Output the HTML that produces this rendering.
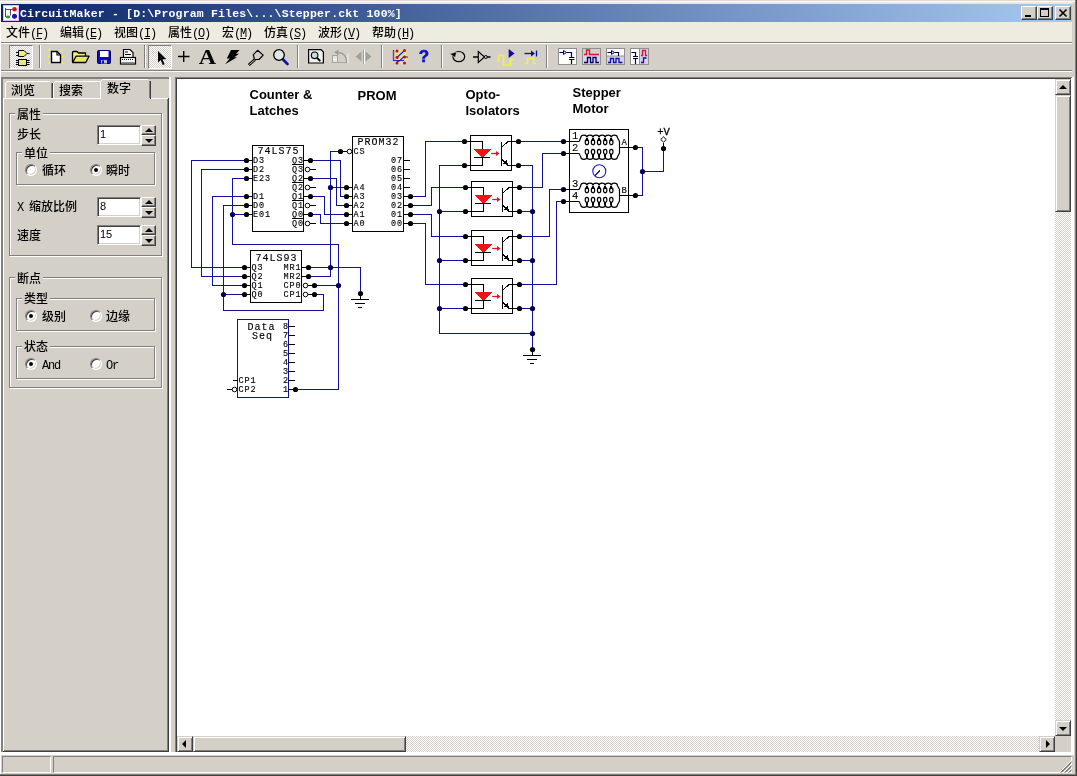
<!DOCTYPE html>
<html lang="zh">
<head>
<meta charset="utf-8">
<title>CircuitMaker</title>
<style>
html,body{margin:0;padding:0;}
body{width:1077px;height:776px;overflow:hidden;background:#d4d0c8;position:relative;
 font-family:"Liberation Sans","Noto Sans CJK SC",sans-serif;font-size:12px;font-weight:500;color:#000;}
.abs{position:absolute;}
#win{position:absolute;left:0;top:0;width:1077px;height:776px;background:#d4d0c8;overflow:hidden;}
#ckt,#menu,#panel,#toolbar,#title .txt{will-change:transform;}
/* outer frame lines */
#fr-top{left:0;top:1px;width:1075px;height:1px;background:#fff;}
#fr-left{left:0;top:1px;width:1px;height:773px;background:#fff;}
#fr-r1{left:1075px;top:0;width:1px;height:775px;background:#808080;}
#fr-r2{left:1076px;top:0;width:1px;height:776px;background:#404040;}
#fr-b1{left:0;top:774px;width:1076px;height:1px;background:#808080;}
#fr-b2{left:0;top:775px;width:1077px;height:1px;background:#404040;}
/* title */
#title{left:1px;top:4px;width:1071px;height:18px;background:linear-gradient(90deg,#0a246a 0%,#a6caf0 100%);}
#title .txt{position:absolute;left:19px;top:2px;color:#fff;font-family:"Liberation Mono",monospace;font-weight:bold;font-size:11.5px;line-height:16px;white-space:pre;letter-spacing:0.17px;}
.tbtn{position:absolute;top:2px;width:16px;height:14px;background:#d4d0c8;box-sizing:border-box;border:1px solid;border-color:#fff #404040 #404040 #fff;box-shadow:inset -1px -1px 0 #808080;}
/* menu */
#menu{left:1px;top:22px;width:1071px;height:20px;background:#eeebe1;}
#menu span.m{position:absolute;top:3px;line-height:16px;white-space:pre;}
.lat{font-family:"Liberation Mono",monospace;letter-spacing:-1.2px;}
u{text-decoration:underline;}
/* toolbar */
#tb-top1{left:1px;top:42px;width:1071px;height:1px;background:#808080;}
#tb-top2{left:1px;top:43px;width:1071px;height:1px;background:#fff;}
#tb-bot1{left:1px;top:70px;width:1071px;height:1px;background:#808080;}
#tb-bot2{left:1px;top:71px;width:1071px;height:1px;background:#fff;}
.sep{position:absolute;top:45px;width:1px;height:23px;background:#808080;box-shadow:1px 0 0 #fff;}
.pressed{position:absolute;top:45px;width:24px;height:24px;box-sizing:border-box;border:1px solid;border-color:#808080 #fff #fff #808080;
 background-color:#fff;background-image:linear-gradient(45deg,#d4d0c8 25%,transparent 25%,transparent 75%,#d4d0c8 75%),linear-gradient(45deg,#d4d0c8 25%,transparent 25%,transparent 75%,#d4d0c8 75%);background-size:2px 2px;background-position:0 0,1px 1px;}
.ico{position:absolute;overflow:visible;}
.track{background-color:#fff;background-image:linear-gradient(45deg,#d4d0c8 25%,transparent 25%,transparent 75%,#d4d0c8 75%),linear-gradient(45deg,#d4d0c8 25%,transparent 25%,transparent 75%,#d4d0c8 75%);background-size:2px 2px;background-position:0 0,1px 1px;}
.rb{box-sizing:border-box;background:#d4d0c8;border:1px solid;border-color:#d4d0c8 #404040 #404040 #d4d0c8;box-shadow:inset 1px 1px 0 #fff, inset -1px -1px 0 #808080;}
.rb i{position:absolute;width:0;height:0;}
.t-up{left:3px;top:5px;border-left:4px solid transparent;border-right:4px solid transparent;border-bottom:4px solid #000;}
.t-dn{left:3px;top:6px;border-left:4px solid transparent;border-right:4px solid transparent;border-top:4px solid #000;}
.t-lt{left:4px;top:3px;border-top:4px solid transparent;border-bottom:4px solid transparent;border-right:4px solid #000;}
.t-rt{left:6px;top:3px;border-top:4px solid transparent;border-bottom:4px solid transparent;border-left:4px solid #000;}
.sc{box-sizing:border-box;border:1px solid;border-color:#808080 #fff #fff #808080;}

.tabt,.lbl,.gl{line-height:16px;white-space:pre;}
.gl{background:#d4d0c8;padding:0 2px;}
.gb{position:absolute;box-sizing:border-box;border:1px solid #808080;box-shadow:1px 1px 0 #fff, inset 1px 1px 0 #fff;}
.inp{position:absolute;box-sizing:border-box;width:44px;height:20px;background:#fff;border:1px solid;border-color:#808080 #fff #fff #808080;box-shadow:inset 1px 1px 0 #404040, inset -1px -1px 0 #d4d0c8;font-family:"Liberation Sans",sans-serif;font-size:11px;line-height:16px;padding:0 0 0 2px;}
.spin{position:absolute;width:15px;height:21px;}
.sb{position:absolute;left:0;top:0;width:15px;height:10px;box-sizing:border-box;background:#d4d0c8;border:1px solid;border-color:#fff #404040 #404040 #fff;box-shadow:inset -1px -1px 0 #808080;}
.sb2{top:10px;height:11px;}
.sb i{position:absolute;left:3px;width:0;height:0;border-left:4px solid transparent;border-right:4px solid transparent;}
.sb i.up{top:2px;border-bottom:4px solid #000;}
.sb i.dn{top:3px;border-top:4px solid #000;}
.radio{position:absolute;width:12px;height:12px;box-sizing:border-box;border-radius:50%;background:#fff;border:1px solid;border-color:#808080 #fff #fff #808080;transform:rotate(0deg);box-shadow:inset 1px 1px 0 #404040, inset -1px -1px 0 #d4d0c8;}
.radio.on::after{content:"";position:absolute;left:3px;top:3px;width:4px;height:4px;border-radius:50%;background:#000;}

</style>
</head>
<body>
<div id="win">
 <div class="abs" style="left:0;top:0;width:1075px;height:1px;background:#dedad2"></div><div class="abs" style="left:1px;top:2px;width:1072px;height:2px;background:#ebe8de"></div>
 <div class="abs" id="fr-top"></div><div class="abs" id="fr-left"></div>
 <div class="abs" id="fr-r1"></div><div class="abs" id="fr-r2"></div>
 <div class="abs" id="fr-b1"></div><div class="abs" id="fr-b2"></div>

 <!-- TITLE BAR -->
 <div class="abs" id="title">
  <svg class="ico" style="left:2px;top:1px" width="16" height="16" viewBox="0 0 16 16">
   <rect x="0" y="0" width="16" height="16" fill="#fff"/>
   <rect x="0.500" y="0.500" width="15" height="15" fill="none" stroke="#e0b8f8"/>
   <path d="M2 4.500H9M2.500 3V12M7.500 4.500V10.500" stroke="#505058" fill="none"/>
   <path d="M3 11.500H7" stroke="#308030" fill="none"/>
   <circle cx="11.500" cy="4.200" r="2.300" fill="#d01020"/>
   <circle cx="11.500" cy="11.300" r="2.500" fill="#1018b0"/>
   <ellipse cx="5" cy="12" rx="2.200" ry="1.400" fill="#28a028"/>
  </svg>
  <span class="txt">CircuitMaker - [D:\Program Files\...\Stepper.ckt 100%]</span>
  <div class="tbtn" style="left:1020px"><div class="abs" style="left:3px;top:8px;width:6px;height:2px;background:#000"></div></div>
  <div class="tbtn" style="left:1036px"><div class="abs" style="left:2px;top:1px;width:9px;height:9px;box-sizing:border-box;border:1px solid #000;border-top-width:2px"></div></div>
  <div class="tbtn" style="left:1054px"><svg class="ico" style="left:3px;top:2px" width="8" height="8" viewBox="0 0 8 8"><path d="M0.500 0.500L7.500 7.500M7.500 0.500L0.500 7.500" stroke="#000" stroke-width="1.600"/></svg></div>
 </div>

 <!-- MENU BAR -->
 <div class="abs" id="menu">
  <span class="m" style="left:5px">文件<span class="lat">(<u>F</u>)</span></span>
  <span class="m" style="left:59px">编辑<span class="lat">(<u>E</u>)</span></span>
  <span class="m" style="left:113px">视图<span class="lat">(<u>I</u>)</span></span>
  <span class="m" style="left:167px">属性<span class="lat">(<u>O</u>)</span></span>
  <span class="m" style="left:221px">宏<span class="lat">(<u>M</u>)</span></span>
  <span class="m" style="left:263px">仿真<span class="lat">(<u>S</u>)</span></span>
  <span class="m" style="left:317px">波形<span class="lat">(<u>V</u>)</span></span>
  <span class="m" style="left:371px">帮助<span class="lat">(<u>H</u>)</span></span>
 </div>

 <!-- TOOLBAR -->
 <div class="abs" id="tb-top1"></div><div class="abs" id="tb-top2"></div>
 <div class="abs" id="tb-bot1"></div><div class="abs" id="tb-bot2"></div>
 <div id="toolbar">
 <div class="pressed" style="left:9px"></div>
 <svg class="ico" style="left:9px;top:45px" width="24" height="24" viewBox="9 45 24 24">
  <path d="M16 52.500H18M16 55.500H18M27 53.500H29.500" stroke="#000" fill="none"/>
  <path d="M18.500 50.500H24L27 53.500L24 56.500H18.500Z" fill="#f0f070" stroke="#000"/>
  <path d="M16 60.500H18M16 62.500H18M16 64.500H18M27 60.500H29.500M27 62.500H29.500M27 64.500H29.500" stroke="#000" fill="none"/>
  <rect x="18.500" y="59.500" width="8" height="6" fill="#e8e880" stroke="#000"/>
 </svg>
 <div class="sep" style="left:39px"></div>
 <!-- new -->
 <svg class="ico" style="left:46px;top:46px" width="20" height="20" viewBox="46 46 20 20">
  <g stroke="#f2f250" stroke-width="1.900"><path d="M48.500 49L50 50.500M62.500 49L61 50.500M48 56.500H49.500M62 56.500H63.500M49 63.500L50.500 62M62.500 63.500L61 62"/></g>
  <path d="M51.500 51.500H57L60.500 55V62.500H51.500Z" fill="#fff" stroke="#000" stroke-width="1.400"/>
  <path d="M57 51.500V55H60.500" fill="none" stroke="#000" stroke-width="1.200"/>
 </svg>
 <!-- open -->
 <svg class="ico" style="left:70px;top:46px" width="22" height="20" viewBox="70 46 22 20">
  <path d="M72.500 62V52.500Q72.500 51.500 73.500 51.500H77L78.500 53H85.500V56" fill="#f0f080" stroke="#000" stroke-width="1.300"/>
  <path d="M72.700 62.500L76 56.200H89L85.800 62.500Z" fill="#e8e870" stroke="#000" stroke-width="1.300" stroke-linejoin="round"/>
 </svg>
 <!-- save -->
 <svg class="ico" style="left:96px;top:48px" width="16" height="18" viewBox="96 48 16 18">
  <rect x="97.500" y="50.500" width="13" height="13" rx="1" fill="#0c0cc4" stroke="#000060"/>
  <rect x="100" y="51" width="8.500" height="6" fill="#fff"/>
  <rect x="101" y="60" width="6" height="3.500" fill="#c0c0c0"/>
  <rect x="102" y="60.500" width="2" height="3" fill="#0c0cc4"/>
 </svg>
 <!-- print -->
 <svg class="ico" style="left:118px;top:46px" width="20" height="20" viewBox="118 46 20 20">
  <path d="M123.500 57V49.500H130L133 52.500V57" fill="#fff" stroke="#000" stroke-width="1.200"/>
  <path d="M125 52H128M125 54.500H131" stroke="#000" stroke-width="1.200"/>
  <rect x="120.500" y="57.500" width="15" height="6.500" fill="#fff" stroke="#000" stroke-width="1.200"/>
  <path d="M122 59.500H134" stroke="#000" stroke-dasharray="1 1"/>
  <path d="M121.500 62.500H134.500" stroke="#909090" stroke-width="1.400"/>
 </svg>
 <div class="sep" style="left:144px"></div>
 <!-- arrow (pressed) -->
 <div class="pressed" style="left:148px"></div>
 <svg class="ico" style="left:148px;top:45px" width="24" height="24" viewBox="148 45 24 24">
  <path d="M158 51V62.500L160.700 60L162.800 65L164.600 64.200L162.500 59.300H166.300Z" fill="#000"/>
 </svg>
 <!-- plus -->
 <svg class="ico" style="left:176px;top:48px" width="16" height="16" viewBox="176 48 16 16">
  <path d="M178 56.500H189.500M183.700 51V62" stroke="#000" stroke-width="1.400"/>
 </svg>
 <!-- A -->
 <div class="abs" style="left:197px;top:45px;width:21px;height:24px;font-family:'Liberation Serif',serif;font-weight:bold;font-size:21px;line-height:24px;text-align:center;transform:scaleX(1.14);transform-origin:50% 50%">A</div>
 <!-- lightning -->
 <svg class="ico" style="left:224px;top:48px" width="18" height="18" viewBox="224 48 18 18">
  <path d="M231 50H239.600L236 53.700H239L234.300 57.300H237L225 64.200L229.800 58.600H226.800Z" fill="#000"/>
 </svg>
 <!-- probe -->
 <svg class="ico" style="left:246px;top:48px" width="20" height="18" viewBox="246 48 20 18">
  <path d="M257.600 50.300L263.200 55.100L259 59.500H254.500L253.300 54.600Z" fill="#d4d0c8" stroke="#000" stroke-width="1.200" stroke-linejoin="round"/>
  <path d="M255 59.500L248.800 65" stroke="#000" stroke-width="2.800"/>
  <path d="M254.800 59.800L249.400 64.500" stroke="#e8e8e8" stroke-width="0.900"/>
 </svg>
 <!-- magnifier -->
 <svg class="ico" style="left:271px;top:47px" width="20" height="20" viewBox="271 47 20 20">
  <path d="M283 59.500L287.500 64" stroke="#1010b0" stroke-width="2.600" stroke-linecap="round"/>
  <circle cx="279" cy="55" r="5.300" fill="#e2e8e8" stroke="#000" stroke-width="1.300"/>
 </svg>
 <div class="sep" style="left:297px"></div>
 <!-- zoom fit -->
 <svg class="ico" style="left:306px;top:47px" width="20" height="18" viewBox="306 47 20 18">
  <path d="M308.600 49.600H321L323.400 52V63H308.600Z" fill="#f0f0ee" stroke="#000" stroke-width="1.200"/>
  <circle cx="314.600" cy="55.300" r="3.300" fill="#c4dcdc" stroke="#000" stroke-width="1.100"/>
  <path d="M317 58L320.300 61" stroke="#000" stroke-width="1.700"/>
 </svg>
 <!-- rotate (disabled) -->
 <svg class="ico" style="left:330px;top:48px" width="20" height="16" viewBox="330 48 20 16">
  <rect x="332.500" y="55.500" width="5" height="7" fill="#e8e6e0" stroke="#a4a49c"/>
  <path d="M332 62.500H347.500M337.500 52V56" fill="none" stroke="#a4a49c"/>
  <path d="M338 52.500Q346.500 53 346.500 62" fill="none" stroke="#a0a098" stroke-width="1.300"/>
  <path d="M334 52.300L338.500 49.600V55Z" fill="#a0a098"/>
  <path d="M333 59.500H337M348 54V63" stroke="#fff" stroke-width="1" opacity="0.800"/>
 </svg>
 <!-- mirror (disabled) -->
 <svg class="ico" style="left:354px;top:48px" width="20" height="16" viewBox="354 48 20 16">
  <path d="M355.500 56.500L361.500 51.500V61.500Z M371.500 56.500L365.500 51.500V61.500Z" fill="#a0a098"/>
  <path d="M363.500 49.500V64" stroke="#a0a098"/><path d="M364.500 49.500V64" stroke="#fff"/>
 </svg>
 <div class="sep" style="left:381px"></div>
 <!-- route -->
 <svg class="ico" style="left:390px;top:47px" width="20" height="20" viewBox="390 47 20 20">
  <circle cx="400.500" cy="57" r="7.500" fill="#f4ec70" opacity="0.450"/>
  <path d="M393.500 50V60.500H404M397 57.500L404.500 50.500M397 62L400 60.500L403.500 57H408" fill="none" stroke="#2020c0" stroke-width="1.200"/>
  <path d="M393.500 50.500V60" stroke="#e02020" stroke-width="1.200"/>
  <g fill="#c01010"><circle cx="397" cy="51" r="1.500"/><circle cx="404.500" cy="50.500" r="1.500"/><circle cx="397" cy="57.500" r="1.500"/><circle cx="404.500" cy="57" r="1.500"/><circle cx="397" cy="63" r="1.500"/><circle cx="404.500" cy="63" r="1.500"/></g>
 </svg>
 <!-- help -->
 <div class="abs" style="left:414px;top:45px;width:20px;height:24px;font-family:'Liberation Sans',sans-serif;font-weight:bold;font-size:17px;line-height:24px;text-align:center;color:#1010c8;-webkit-text-stroke:0.6px #1010c8">?</div>
 <div class="sep" style="left:441px"></div>
 <!-- reset -->
 <svg class="ico" style="left:448px;top:48px" width="20" height="16" viewBox="448 48 20 16">
  <ellipse cx="458.800" cy="56.600" rx="5.900" ry="5.100" fill="none" stroke="#000" stroke-width="1.200"/>
  <path d="M449.800 53.800L456.600 52L455.200 57.600Z" fill="#000" stroke="#d4d0c8" stroke-width="0.600"/>
 </svg>
 <!-- inverter -->
 <svg class="ico" style="left:471px;top:48px" width="22" height="16" viewBox="471 48 22 16">
  <path d="M473 57H478M486.500 57H490.500" stroke="#000" stroke-width="1.600"/>
  <path d="M478.300 51.500V62.500L484.500 57Z" fill="#d4d0c8" stroke="#000" stroke-width="1.200"/>
  <circle cx="485.800" cy="57" r="1.500" fill="#d4d0c8" stroke="#000"/>
 </svg>
 <!-- run -->
 <svg class="ico" style="left:496px;top:47px" width="20" height="20" viewBox="496 47 20 20">
  <path d="M498.500 62V55.500H503.500V65H510.500V59.500H514" fill="none" stroke="#f0f050" stroke-width="1.600"/>
  <path d="M508.700 49L514.500 53.500L508.700 58Z" fill="#0c0c94"/>
 </svg>
 <!-- step -->
 <svg class="ico" style="left:521px;top:47px" width="20" height="20" viewBox="521 47 20 20">
  <path d="M524.500 63.500H527.500V58.500H533.500V63.500H536" fill="none" stroke="#f0f050" stroke-width="1.600"/>
  <path d="M524.500 53.500H532" stroke="#0c0ca0" stroke-width="1.300"/>
  <path d="M531 50.500L535 53.500L531 56.500Z" fill="#0c0ca0"/>
  <path d="M536.500 50.500V56.500" stroke="#0c0ca0" stroke-width="1.300"/>
 </svg>
 <div class="sep" style="left:546px"></div>
 <!-- A: probe cap -->
 <svg class="ico" style="left:558px;top:48px" width="19" height="17" viewBox="558 48 19 17">
  <rect x="558.500" y="48.500" width="18" height="16" fill="#fff" stroke="#909090"/>
  <path d="M559.500 52.500H563M566.500 52.500H571.500V57M569 57.500H574.500M569 59.500H574.500M571.500 60V64" fill="none" stroke="#000040" stroke-width="1.200"/>
  <path d="M563.500 50.500V54.500L566.500 52.500Z" fill="#fff" stroke="#000060"/>
 </svg>
 <!-- B: waves -->
 <svg class="ico" style="left:582px;top:48px" width="19" height="17" viewBox="582 48 19 17">
  <rect x="582.500" y="48.500" width="18" height="16" fill="#d8d4e8" stroke="#909090"/>
  <rect x="583" y="49" width="17" height="7" fill="#ccd4cc"/>
  <path d="M584 54.500H586.500V50H589.500V54.500H599" fill="none" stroke="#e01030" stroke-width="1.400"/>
  <path d="M584 62.500H587.500V57.500H590.500V62.500H593V57.500H596V62.500H599" fill="none" stroke="#000060" stroke-width="1.300"/>
 </svg>
 <!-- C -->
 <svg class="ico" style="left:606px;top:48px" width="19" height="17" viewBox="606 48 19 17">
  <rect x="606.500" y="48.500" width="18" height="16" fill="#fff" stroke="#909090"/>
  <rect x="607" y="56" width="17" height="8" fill="#d4d0e8"/>
  <path d="M607 56H624" stroke="#909090"/>
  <path d="M607.500 52.500H611M614.500 52.500H618.500V56" fill="none" stroke="#000040" stroke-width="1.200"/>
  <path d="M611.500 50.500V54.500L614.500 52.500Z" fill="#fff" stroke="#000060"/>
  <path d="M608 62.500H610.500V58.500H613.500V62.500H616V58.500H619V62.500H622.500" fill="none" stroke="#1010a0" stroke-width="1.300"/>
 </svg>
 <!-- D -->
 <svg class="ico" style="left:630px;top:48px" width="19" height="17" viewBox="630 48 19 17">
  <rect x="630.500" y="48.500" width="18" height="16" fill="#fff" stroke="#909090"/>
  <rect x="640" y="49" width="8" height="15" fill="#d4d0e8"/>
  <path d="M639.500 49V64" stroke="#909090"/>
  <path d="M631.500 52.500H635.500V56M633 56.500H638M633 58.500H638M635.500 59V64" fill="none" stroke="#000040" stroke-width="1.200"/>
  <path d="M641 55.500H642.500V50.500H645.500V55.500H647" fill="none" stroke="#e01030" stroke-width="1.300"/>
  <path d="M641 62.500H643.500V58H646.500" fill="none" stroke="#1010a0" stroke-width="1.300"/>
 </svg>
 </div>

 <!-- LEFT PANEL -->
 <div id="panel">
 <!-- frame -->
 <div class="abs" style="left:1px;top:77px;width:170px;height:2px;background:#808080"></div>
 <div class="abs" style="left:1px;top:77px;width:2px;height:677px;background:#808080"></div>
 <div class="abs" style="left:169px;top:77px;width:2px;height:677px;background:#fff"></div>
 <div class="abs" style="left:1px;top:752px;width:175px;height:2px;background:#fff"></div>
 <!-- tab body -->
 <div class="abs" style="left:3px;top:98px;width:98px;height:1px;background:#fff"></div>
 <div class="abs" style="left:151px;top:98px;width:17px;height:1px;background:#fff"></div>
 <div class="abs" style="left:3px;top:98px;width:1px;height:653px;background:#fff"></div>
 <div class="abs" style="left:167px;top:99px;width:1px;height:652px;background:#808080"></div>
 <div class="abs" style="left:168px;top:98px;width:1px;height:654px;background:#404040"></div>
 <div class="abs" style="left:4px;top:750px;width:164px;height:1px;background:#808080"></div>
 <div class="abs" style="left:3px;top:751px;width:166px;height:1px;background:#404040"></div>
 <!-- tab 1 -->
 <div class="abs" style="left:5px;top:83px;width:1px;height:15px;background:#fff"></div>
 <div class="abs" style="left:6px;top:82px;width:1px;height:1px;background:#fff"></div>
 <div class="abs" style="left:7px;top:81px;width:43px;height:1px;background:#fff"></div>
 <div class="abs" style="left:51px;top:83px;width:1px;height:15px;background:#808080"></div>
 <div class="abs" style="left:52px;top:83px;width:1px;height:15px;background:#404040"></div>
 <div class="abs tabt" style="left:11px;top:83px">浏览</div>
 <!-- tab 2 -->
 <div class="abs" style="left:53px;top:83px;width:1px;height:15px;background:#fff"></div>
 <div class="abs" style="left:54px;top:82px;width:1px;height:1px;background:#fff"></div>
 <div class="abs" style="left:55px;top:81px;width:45px;height:1px;background:#fff"></div>
 <div class="abs tabt" style="left:59px;top:83px">搜索</div>
 <!-- tab 3 selected -->
 <div class="abs" style="left:100px;top:81px;width:1px;height:18px;background:#fff"></div>
 <div class="abs" style="left:101px;top:80px;width:1px;height:1px;background:#fff"></div>
 <div class="abs" style="left:102px;top:79px;width:46px;height:1px;background:#fff"></div>
 <div class="abs" style="left:149px;top:81px;width:1px;height:17px;background:#808080"></div>
 <div class="abs" style="left:150px;top:81px;width:1px;height:18px;background:#404040"></div>
 <div class="abs tabt" style="left:107px;top:81px">数字</div>

 <!-- groupbox 属性 -->
 <div class="gb" style="left:9px;top:113px;width:153px;height:143px"></div>
 <div class="abs gl" style="left:15px;top:107px">属性</div>
 <div class="abs lbl" style="left:17px;top:127px">步长</div>
 <div class="inp" style="left:97px;top:125px">1</div>
 <div class="spin" style="left:141px;top:125px"><div class="sb"><i class="up"></i></div><div class="sb sb2"><i class="dn"></i></div></div>
 <div class="gb" style="left:16px;top:152px;width:139px;height:33px"></div>
 <div class="abs gl" style="left:22px;top:146px">单位</div>
 <div class="radio" style="left:25px;top:164px"></div>
 <div class="abs lbl" style="left:42px;top:163px">循环</div>
 <div class="radio on" style="left:90px;top:164px"></div>
 <div class="abs lbl" style="left:106px;top:163px">瞬时</div>
 <div class="abs lbl" style="left:17px;top:199px"><span class="lat">X </span>缩放比例</div>
 <div class="inp" style="left:97px;top:197px">8</div>
 <div class="spin" style="left:141px;top:197px"><div class="sb"><i class="up"></i></div><div class="sb sb2"><i class="dn"></i></div></div>
 <div class="abs lbl" style="left:17px;top:228px">速度</div>
 <div class="inp" style="left:97px;top:225px">15</div>
 <div class="spin" style="left:141px;top:225px"><div class="sb"><i class="up"></i></div><div class="sb sb2"><i class="dn"></i></div></div>

 <!-- groupbox 断点 -->
 <div class="gb" style="left:9px;top:277px;width:153px;height:111px"></div>
 <div class="abs gl" style="left:15px;top:271px">断点</div>
 <div class="gb" style="left:16px;top:298px;width:139px;height:33px"></div>
 <div class="abs gl" style="left:22px;top:291px">类型</div>
 <div class="radio on" style="left:25px;top:310px"></div>
 <div class="abs lbl" style="left:42px;top:309px">级别</div>
 <div class="radio" style="left:90px;top:310px"></div>
 <div class="abs lbl" style="left:106px;top:309px">边缘</div>
 <div class="gb" style="left:16px;top:346px;width:139px;height:33px"></div>
 <div class="abs gl" style="left:22px;top:339px">状态</div>
 <div class="radio on" style="left:25px;top:358px"></div>
 <div class="abs lbl lat" style="left:42px;top:358px">And</div>
 <div class="radio" style="left:90px;top:358px"></div>
 <div class="abs lbl lat" style="left:106px;top:358px">Or</div>
 </div>

 <!-- CANVAS -->
 <div id="canvas">
 <div class="abs" style="left:175px;top:77px;width:899px;height:677px;background:#fff"></div>
 <div class="abs" style="left:175px;top:77px;width:897px;height:1px;background:#808080"></div>
 <div class="abs" style="left:175px;top:78px;width:896px;height:1px;background:#404040"></div>
 <div class="abs" style="left:175px;top:77px;width:1px;height:675px;background:#808080"></div>
 <div class="abs" style="left:176px;top:78px;width:1px;height:674px;background:#404040"></div>
 <!-- v scrollbar -->
 <div class="abs track" style="left:1055px;top:79px;width:16px;height:657px"></div>
 <div class="abs rb" style="left:1055px;top:79px;width:16px;height:16px"><i class="t-up"></i></div>
 <div class="abs rb" style="left:1055px;top:95px;width:16px;height:117px"></div>
 <div class="abs rb" style="left:1055px;top:720px;width:16px;height:16px"><i class="t-dn"></i></div>
 <!-- h scrollbar -->
 <div class="abs track" style="left:177px;top:736px;width:878px;height:16px"></div>
 <div class="abs rb" style="left:177px;top:736px;width:16px;height:16px"><i class="t-lt"></i></div>
 <div class="abs rb" style="left:193px;top:736px;width:213px;height:16px"></div>
 <div class="abs rb" style="left:1039px;top:736px;width:16px;height:16px"><i class="t-rt"></i></div>
 <div class="abs" style="left:1055px;top:736px;width:16px;height:16px;background:#d4d0c8"></div>
 <!-- circuit -->
<!--CIRCUIT-START-->
<svg class="ico" id="ckt" style="left:0;top:0" width="1077" height="776" viewBox="0 0 1077 776" shape-rendering="crispEdges">
<style>#ckt text{font-family:"Liberation Mono",monospace;fill:#000;stroke:#000;stroke-width:0.12px;shape-rendering:auto}#ckt .pl{font-size:8.5px;letter-spacing:0.9px}#ckt .tl{font-size:10px;letter-spacing:1px}#ckt .ml{font-size:9px;letter-spacing:0.6px}#ckt .mn{font-size:10.5px}#ckt .pv{font-size:10.5px;stroke-width:0.3px}#ckt .hd{font-family:"Liberation Sans",sans-serif;font-weight:bold;font-size:13px;stroke:none}#ckt circle,#ckt ellipse{shape-rendering:geometricPrecision}</style>
<text x="249.500" y="99" class="hd">Counter &amp;</text>
<text x="249.500" y="115" class="hd">Latches</text>
<text x="357.500" y="99.500" class="hd">PROM</text>
<text x="465.500" y="99" class="hd">Opto-</text>
<text x="465.500" y="115" class="hd">Isolators</text>
<text x="572.500" y="97" class="hd">Stepper</text>
<text x="572.500" y="113" class="hd">Motor</text>
<path d="M246.5 160.5 L191.5 160.5 L191.5 267.5 L244.5 267.5" stroke="#10109c" stroke-width="1" fill="none"/>
<path d="M246.5 169.5 L201.5 169.5 L201.5 276.5 L244.5 276.5" stroke="#10109c" stroke-width="1" fill="none"/>
<path d="M246.5 196.5 L212.5 196.5 L212.5 285.5 L244.5 285.5" stroke="#10109c" stroke-width="1" fill="none"/>
<path d="M246.5 205.5 L223.5 205.5 L223.5 310.5 L323.5 310.5 L323.5 294.5 L314.5 294.5" stroke="#10109c" stroke-width="1" fill="none"/>
<path d="M223.5 294.5 L244.5 294.5" stroke="#10109c" stroke-width="1" fill="none"/>
<path d="M246.5 178.5 L232.5 178.5 L232.5 244.5 L338.5 244.5 L338.5 389.5 L295.5 389.5" stroke="#10109c" stroke-width="1" fill="none"/>
<path d="M232.5 214.5 L246.5 214.5" stroke="#10109c" stroke-width="1" fill="none"/>
<path d="M314.5 285.5 L338.5 285.5" stroke="#10109c" stroke-width="1" fill="none"/>
<path d="M310.5 160.5 L340.5 160.5 L340.5 196.5 L346.5 196.5" stroke="#10109c" stroke-width="1" fill="none"/>
<path d="M310.5 178.5 L336.5 178.5 L336.5 205.5 L346.5 205.5" stroke="#10109c" stroke-width="1" fill="none"/>
<path d="M310.5 196.5 L324.5 196.5 L324.5 214.5 L346.5 214.5" stroke="#10109c" stroke-width="1" fill="none"/>
<path d="M310.5 214.5 L320.5 214.5 L320.5 223.5 L346.5 223.5" stroke="#10109c" stroke-width="1" fill="none"/>
<path d="M340.5 151.5 L330.5 151.5 L330.5 276.5 L308.5 276.5" stroke="#10109c" stroke-width="1" fill="none"/>
<path d="M330.5 187.5 L346.5 187.5" stroke="#10109c" stroke-width="1" fill="none"/>
<path d="M308.5 267.5 L360.5 267.5 L360.5 293.5" stroke="#10109c" stroke-width="1" fill="none"/>
<path d="M410.5 196.5 L425.5 196.5 L425.5 141.5 L464.5 141.5" stroke="#10109c" stroke-width="1" fill="none"/>
<path d="M410.5 205.5 L431.5 205.5 L431.5 187.5 L465.5 187.5" stroke="#10109c" stroke-width="1" fill="none"/>
<path d="M410.5 214.5 L431.5 214.5 L431.5 236.5 L465.5 236.5" stroke="#10109c" stroke-width="1" fill="none"/>
<path d="M410.5 223.5 L425.5 223.5 L425.5 284.5 L465.5 284.5" stroke="#10109c" stroke-width="1" fill="none"/>
<path d="M464.5 165.5 L439.5 165.5 L439.5 333.5 L532.5 333.5" stroke="#10109c" stroke-width="1" fill="none"/>
<path d="M439.5 211.5 L465.5 211.5" stroke="#10109c" stroke-width="1" fill="none"/>
<path d="M439.5 260.5 L465.5 260.5" stroke="#10109c" stroke-width="1" fill="none"/>
<path d="M439.5 308.5 L465.5 308.5" stroke="#10109c" stroke-width="1" fill="none"/>
<path d="M518.5 165.5 L532.5 165.5 L532.5 349.5" stroke="#10109c" stroke-width="1" fill="none"/>
<path d="M519.5 211.5 L532.5 211.5" stroke="#10109c" stroke-width="1" fill="none"/>
<path d="M519.5 260.5 L532.5 260.5" stroke="#10109c" stroke-width="1" fill="none"/>
<path d="M519.5 308.5 L532.5 308.5" stroke="#10109c" stroke-width="1" fill="none"/>
<path d="M518.5 141.5 L563.5 141.5" stroke="#10109c" stroke-width="1" fill="none"/>
<path d="M519.5 187.5 L542.5 187.5 L542.5 153.5 L563.5 153.5" stroke="#10109c" stroke-width="1" fill="none"/>
<path d="M519.5 236.5 L549.5 236.5 L549.5 189.5 L563.5 189.5" stroke="#10109c" stroke-width="1" fill="none"/>
<path d="M519.5 284.5 L556.5 284.5 L556.5 201.5 L563.5 201.5" stroke="#10109c" stroke-width="1" fill="none"/>
<path d="M635.5 147.5 L642.5 147.5 L642.5 195.5 L635.5 195.5" stroke="#10109c" stroke-width="1" fill="none"/>
<path d="M642.5 171.5 L663.5 171.5 L663.5 148.5" stroke="#10109c" stroke-width="1" fill="none"/>
<rect x="252.5" y="145.5" width="51" height="86" fill="#fff" stroke="#000"/>
<text x="278.5" y="154" class="tl" text-anchor="middle">74LS75</text>
<path d="M246.5 160.5 L252.5 160.5" stroke="#000" stroke-width="1" fill="none"/>
<circle cx="246.5" cy="160.5" r="2.6" fill="#000"/>
<text x="253" y="163.3" class="pl" text-anchor="start">D3</text>
<path d="M246.5 169.5 L252.5 169.5" stroke="#000" stroke-width="1" fill="none"/>
<circle cx="246.5" cy="169.5" r="2.6" fill="#000"/>
<text x="253" y="172.3" class="pl" text-anchor="start">D2</text>
<path d="M246.5 178.5 L252.5 178.5" stroke="#000" stroke-width="1" fill="none"/>
<circle cx="246.5" cy="178.5" r="2.6" fill="#000"/>
<text x="253" y="181.3" class="pl" text-anchor="start">E23</text>
<path d="M246.5 196.5 L252.5 196.5" stroke="#000" stroke-width="1" fill="none"/>
<circle cx="246.5" cy="196.5" r="2.6" fill="#000"/>
<text x="253" y="199.3" class="pl" text-anchor="start">D1</text>
<path d="M246.5 205.5 L252.5 205.5" stroke="#000" stroke-width="1" fill="none"/>
<circle cx="246.5" cy="205.5" r="2.6" fill="#000"/>
<text x="253" y="208.3" class="pl" text-anchor="start">D0</text>
<path d="M246.5 214.5 L252.5 214.5" stroke="#000" stroke-width="1" fill="none"/>
<circle cx="246.5" cy="214.5" r="2.6" fill="#000"/>
<text x="253" y="217.3" class="pl" text-anchor="start">E01</text>
<text x="303.9" y="163.3" class="pl" text-anchor="end">Q3</text>
<path d="M303.5 160.5 L310.5 160.5" stroke="#000" stroke-width="1" fill="none"/>
<circle cx="310.5" cy="160.5" r="2.6" fill="#000"/>
<text x="303.9" y="172.3" class="pl" text-anchor="end">Q3</text>
<path d="M309.5 169.5 L315.5 169.5" stroke="#000" stroke-width="1" fill="none"/>
<circle cx="307.5" cy="169.5" r="2.3" fill="#fff" stroke="#000"/>
<path d="M291.5 164.5 L303.5 164.5" stroke="#000" stroke-width="1" fill="none"/>
<text x="303.9" y="181.3" class="pl" text-anchor="end">Q2</text>
<path d="M303.5 178.5 L310.5 178.5" stroke="#000" stroke-width="1" fill="none"/>
<circle cx="310.5" cy="178.5" r="2.6" fill="#000"/>
<text x="303.9" y="190.3" class="pl" text-anchor="end">Q2</text>
<path d="M309.5 187.5 L315.5 187.5" stroke="#000" stroke-width="1" fill="none"/>
<circle cx="307.5" cy="187.5" r="2.3" fill="#fff" stroke="#000"/>
<path d="M291.5 182.5 L303.5 182.5" stroke="#000" stroke-width="1" fill="none"/>
<text x="303.9" y="199.3" class="pl" text-anchor="end">Q1</text>
<path d="M303.5 196.5 L310.5 196.5" stroke="#000" stroke-width="1" fill="none"/>
<circle cx="310.5" cy="196.5" r="2.6" fill="#000"/>
<text x="303.9" y="208.3" class="pl" text-anchor="end">Q1</text>
<path d="M309.5 205.5 L315.5 205.5" stroke="#000" stroke-width="1" fill="none"/>
<circle cx="307.5" cy="205.5" r="2.3" fill="#fff" stroke="#000"/>
<path d="M291.5 200.5 L303.5 200.5" stroke="#000" stroke-width="1" fill="none"/>
<text x="303.9" y="217.3" class="pl" text-anchor="end">Q0</text>
<path d="M303.5 214.5 L310.5 214.5" stroke="#000" stroke-width="1" fill="none"/>
<circle cx="310.5" cy="214.5" r="2.6" fill="#000"/>
<text x="303.9" y="226.3" class="pl" text-anchor="end">Q0</text>
<path d="M309.5 223.5 L315.5 223.5" stroke="#000" stroke-width="1" fill="none"/>
<circle cx="307.5" cy="223.5" r="2.3" fill="#fff" stroke="#000"/>
<path d="M291.5 218.5 L303.5 218.5" stroke="#000" stroke-width="1" fill="none"/>
<rect x="352.5" y="136.5" width="51" height="95" fill="#fff" stroke="#000"/>
<text x="378.5" y="145" class="tl" text-anchor="middle">PROM32</text>
<path d="M340.5 151.5 L347.5 151.5" stroke="#000" stroke-width="1" fill="none"/>
<circle cx="340.5" cy="151.5" r="2.6" fill="#000"/>
<circle cx="349.5" cy="151.5" r="2.3" fill="#fff" stroke="#000"/>
<text x="353.5" y="154.3" class="pl" text-anchor="start">CS</text>
<path d="M346.5 187.5 L352.5 187.5" stroke="#000" stroke-width="1" fill="none"/>
<circle cx="346.5" cy="187.5" r="2.6" fill="#000"/>
<text x="353.5" y="190.3" class="pl" text-anchor="start">A4</text>
<path d="M346.5 196.5 L352.5 196.5" stroke="#000" stroke-width="1" fill="none"/>
<circle cx="346.5" cy="196.5" r="2.6" fill="#000"/>
<text x="353.5" y="199.3" class="pl" text-anchor="start">A3</text>
<path d="M346.5 205.5 L352.5 205.5" stroke="#000" stroke-width="1" fill="none"/>
<circle cx="346.5" cy="205.5" r="2.6" fill="#000"/>
<text x="353.5" y="208.3" class="pl" text-anchor="start">A2</text>
<path d="M346.5 214.5 L352.5 214.5" stroke="#000" stroke-width="1" fill="none"/>
<circle cx="346.5" cy="214.5" r="2.6" fill="#000"/>
<text x="353.5" y="217.3" class="pl" text-anchor="start">A1</text>
<path d="M346.5 223.5 L352.5 223.5" stroke="#000" stroke-width="1" fill="none"/>
<circle cx="346.5" cy="223.5" r="2.6" fill="#000"/>
<text x="353.5" y="226.3" class="pl" text-anchor="start">A0</text>
<path d="M403.5 160.5 L409.5 160.5" stroke="#000" stroke-width="1" fill="none"/>
<text x="402.9" y="163.3" class="pl" text-anchor="end">07</text>
<path d="M403.5 169.5 L409.5 169.5" stroke="#000" stroke-width="1" fill="none"/>
<text x="402.9" y="172.3" class="pl" text-anchor="end">06</text>
<path d="M403.5 178.5 L409.5 178.5" stroke="#000" stroke-width="1" fill="none"/>
<text x="402.9" y="181.3" class="pl" text-anchor="end">05</text>
<path d="M403.5 187.5 L409.5 187.5" stroke="#000" stroke-width="1" fill="none"/>
<text x="402.9" y="190.3" class="pl" text-anchor="end">04</text>
<path d="M403.5 196.5 L410.5 196.5" stroke="#000" stroke-width="1" fill="none"/>
<circle cx="410.5" cy="196.5" r="2.6" fill="#000"/>
<text x="402.9" y="199.3" class="pl" text-anchor="end">03</text>
<path d="M403.5 205.5 L410.5 205.5" stroke="#000" stroke-width="1" fill="none"/>
<circle cx="410.5" cy="205.5" r="2.6" fill="#000"/>
<text x="402.9" y="208.3" class="pl" text-anchor="end">02</text>
<path d="M403.5 214.5 L410.5 214.5" stroke="#000" stroke-width="1" fill="none"/>
<circle cx="410.5" cy="214.5" r="2.6" fill="#000"/>
<text x="402.9" y="217.3" class="pl" text-anchor="end">01</text>
<path d="M403.5 223.5 L410.5 223.5" stroke="#000" stroke-width="1" fill="none"/>
<circle cx="410.5" cy="223.5" r="2.6" fill="#000"/>
<text x="402.9" y="226.3" class="pl" text-anchor="end">00</text>
<rect x="250.5" y="250.5" width="51" height="52" fill="#fff" stroke="#000"/>
<text x="276.5" y="260.5" class="tl" text-anchor="middle">74LS93</text>
<path d="M244.5 267.5 L250.5 267.5" stroke="#000" stroke-width="1" fill="none"/>
<circle cx="244.5" cy="267.5" r="2.6" fill="#000"/>
<text x="251.5" y="270.3" class="pl" text-anchor="start">Q3</text>
<path d="M244.5 276.5 L250.5 276.5" stroke="#000" stroke-width="1" fill="none"/>
<circle cx="244.5" cy="276.5" r="2.6" fill="#000"/>
<text x="251.5" y="279.3" class="pl" text-anchor="start">Q2</text>
<path d="M244.5 285.5 L250.5 285.5" stroke="#000" stroke-width="1" fill="none"/>
<circle cx="244.5" cy="285.5" r="2.6" fill="#000"/>
<text x="251.5" y="288.3" class="pl" text-anchor="start">Q1</text>
<path d="M244.5 294.5 L250.5 294.5" stroke="#000" stroke-width="1" fill="none"/>
<circle cx="244.5" cy="294.5" r="2.6" fill="#000"/>
<text x="251.5" y="297.3" class="pl" text-anchor="start">Q0</text>
<path d="M301.5 267.5 L308.5 267.5" stroke="#000" stroke-width="1" fill="none"/>
<circle cx="308.5" cy="267.5" r="2.6" fill="#000"/>
<text x="301.4" y="270.3" class="pl" text-anchor="end">MR1</text>
<path d="M301.5 276.5 L308.5 276.5" stroke="#000" stroke-width="1" fill="none"/>
<circle cx="308.5" cy="276.5" r="2.6" fill="#000"/>
<text x="301.4" y="279.3" class="pl" text-anchor="end">MR2</text>
<path d="M307.5 285.5 L314.5 285.5" stroke="#000" stroke-width="1" fill="none"/>
<circle cx="305.5" cy="285.5" r="2.3" fill="#fff" stroke="#000"/>
<circle cx="314.5" cy="285.5" r="2.6" fill="#000"/>
<text x="301.4" y="288.3" class="pl" text-anchor="end">CP0</text>
<path d="M307.5 294.5 L314.5 294.5" stroke="#000" stroke-width="1" fill="none"/>
<circle cx="305.5" cy="294.5" r="2.3" fill="#fff" stroke="#000"/>
<circle cx="314.5" cy="294.5" r="2.6" fill="#000"/>
<text x="301.4" y="297.3" class="pl" text-anchor="end">CP1</text>
<rect x="237.5" y="319.5" width="51" height="78" fill="#fff" stroke="#10109c"/>
<text x="261.5" y="330" class="tl" text-anchor="middle">Data</text>
<text x="262.5" y="338.5" class="tl" text-anchor="middle">Seq</text>
<path d="M288.5 326.5 L294.5 326.5" stroke="#000" stroke-width="1" fill="none"/>
<text x="288.9" y="329.3" class="pl" text-anchor="end">8</text>
<path d="M288.5 335.5 L294.5 335.5" stroke="#000" stroke-width="1" fill="none"/>
<text x="288.9" y="338.3" class="pl" text-anchor="end">7</text>
<path d="M288.5 344.5 L294.5 344.5" stroke="#000" stroke-width="1" fill="none"/>
<text x="288.9" y="347.3" class="pl" text-anchor="end">6</text>
<path d="M288.5 353.5 L294.5 353.5" stroke="#000" stroke-width="1" fill="none"/>
<text x="288.9" y="356.3" class="pl" text-anchor="end">5</text>
<path d="M288.5 362.5 L294.5 362.5" stroke="#000" stroke-width="1" fill="none"/>
<text x="288.9" y="365.3" class="pl" text-anchor="end">4</text>
<path d="M288.5 371.5 L294.5 371.5" stroke="#000" stroke-width="1" fill="none"/>
<text x="288.9" y="374.3" class="pl" text-anchor="end">3</text>
<path d="M288.5 380.5 L294.5 380.5" stroke="#000" stroke-width="1" fill="none"/>
<text x="288.9" y="383.3" class="pl" text-anchor="end">2</text>
<path d="M288.5 389.5 L294.5 389.5" stroke="#000" stroke-width="1" fill="none"/>
<text x="288.9" y="392.3" class="pl" text-anchor="end">1</text>
<circle cx="295.5" cy="389.5" r="2.6" fill="#000"/>
<path d="M232.5 380.5 L237.5 380.5" stroke="#000" stroke-width="1" fill="none"/>
<text x="238.5" y="383.3" class="pl" text-anchor="start">CP1</text>
<path d="M226.5 389.5 L231.5 389.5" stroke="#000" stroke-width="1" fill="none"/>
<circle cx="234.5" cy="389.5" r="2.3" fill="#fff" stroke="#000"/>
<text x="238.5" y="392.3" class="pl" text-anchor="start">CP2</text>
<path d="M360.5 293.5 L360.5 299.5" stroke="#000" stroke-width="1" fill="none"/>
<circle cx="360.5" cy="293.5" r="2.6" fill="#000"/>
<path d="M350.5 299.5 L368.5 299.5" stroke="#000" stroke-width="1" fill="none"/>
<path d="M354.5 303.5 L364.5 303.5" stroke="#000" stroke-width="1" fill="none"/>
<path d="M357.5 307.5 L361.5 307.5" stroke="#000" stroke-width="1" fill="none"/>
<path d="M532.5 349.5 L532.5 355.5" stroke="#000" stroke-width="1" fill="none"/>
<circle cx="532.5" cy="349.5" r="2.6" fill="#000"/>
<path d="M522.5 355.5 L540.5 355.5" stroke="#000" stroke-width="1" fill="none"/>
<path d="M526.5 359.5 L536.5 359.5" stroke="#000" stroke-width="1" fill="none"/>
<path d="M529.5 363.5 L533.5 363.5" stroke="#000" stroke-width="1" fill="none"/>
<circle cx="223.5" cy="294.5" r="2.6" fill="#000048"/>
<circle cx="232.5" cy="214.5" r="2.6" fill="#000048"/>
<circle cx="338.5" cy="285.5" r="2.6" fill="#000048"/>
<circle cx="330.5" cy="187.5" r="2.6" fill="#000048"/>
<circle cx="330.5" cy="267.5" r="2.6" fill="#000048"/>
<circle cx="439.5" cy="211.5" r="2.6" fill="#000048"/>
<circle cx="439.5" cy="260.5" r="2.6" fill="#000048"/>
<circle cx="439.5" cy="308.5" r="2.6" fill="#000048"/>
<circle cx="532.5" cy="211.5" r="2.6" fill="#000048"/>
<circle cx="532.5" cy="260.5" r="2.6" fill="#000048"/>
<circle cx="532.5" cy="308.5" r="2.6" fill="#000048"/>
<circle cx="532.5" cy="333.5" r="2.6" fill="#000048"/>
<circle cx="642.5" cy="171.5" r="2.6" fill="#000048"/>
<rect x="470.5" y="135.5" width="41" height="35" fill="#fff" stroke="#000"/>
<path d="M464.5 141.5 L482.5 141.5 L482.5 165.5 L464.5 165.5" stroke="#000" stroke-width="1" fill="none"/>
<path d="M474 149H491L482.5 158Z" fill="#f01414"/>
<path d="M474 157.5 L490 157.5" stroke="#000" stroke-width="1" fill="none"/>
<path d="M491.2 153.5H497.5" stroke="#d81830" stroke-width="1.300" fill="none" shape-rendering="geometricPrecision"/>
<path d="M496 150.9L499.6 153.5L496 156.1Z" fill="#d81830" shape-rendering="geometricPrecision"/>
<path d="M501.5 141.5 L501.5 165.5" stroke="#000" stroke-width="1" fill="none"/>
<path d="M501.5 147.5 L508 141.5 L518.5 141.5" stroke="#000" stroke-width="1" fill="none"/>
<path d="M501.5 159 L508 165.5 L518.5 165.5" stroke="#000" stroke-width="1" fill="none"/>
<path d="M508 165L503 163.8L506.8 159.8Z" fill="#000"/>
<circle cx="464.5" cy="141.5" r="2.6" fill="#000"/>
<circle cx="464.5" cy="165.5" r="2.6" fill="#000"/>
<circle cx="518.5" cy="141.5" r="2.6" fill="#000"/>
<circle cx="518.5" cy="165.5" r="2.6" fill="#000"/>
<rect x="471.5" y="181.5" width="41" height="35" fill="#fff" stroke="#000"/>
<path d="M465.5 187.5 L483.5 187.5 L483.5 211.5 L465.5 211.5" stroke="#000" stroke-width="1" fill="none"/>
<path d="M475 195H492L483.5 204Z" fill="#f01414"/>
<path d="M475 203.5 L491 203.5" stroke="#000" stroke-width="1" fill="none"/>
<path d="M492.2 199.5H498.5" stroke="#d81830" stroke-width="1.300" fill="none" shape-rendering="geometricPrecision"/>
<path d="M497 196.9L500.6 199.5L497 202.1Z" fill="#d81830" shape-rendering="geometricPrecision"/>
<path d="M502.5 187.5 L502.5 211.5" stroke="#000" stroke-width="1" fill="none"/>
<path d="M502.5 193.5 L509 187.5 L519.5 187.5" stroke="#000" stroke-width="1" fill="none"/>
<path d="M502.5 205 L509 211.5 L519.5 211.5" stroke="#000" stroke-width="1" fill="none"/>
<path d="M509 211L504 209.8L507.8 205.8Z" fill="#000"/>
<circle cx="465.5" cy="187.5" r="2.6" fill="#000"/>
<circle cx="465.5" cy="211.5" r="2.6" fill="#000"/>
<circle cx="519.5" cy="187.5" r="2.6" fill="#000"/>
<circle cx="519.5" cy="211.5" r="2.6" fill="#000"/>
<rect x="471.5" y="230.5" width="41" height="35" fill="#fff" stroke="#000"/>
<path d="M465.5 236.5 L483.5 236.5 L483.5 260.5 L465.5 260.5" stroke="#000" stroke-width="1" fill="none"/>
<path d="M475 244H492L483.5 253Z" fill="#f01414"/>
<path d="M475 252.5 L491 252.5" stroke="#000" stroke-width="1" fill="none"/>
<path d="M492.2 248.5H498.5" stroke="#d81830" stroke-width="1.300" fill="none" shape-rendering="geometricPrecision"/>
<path d="M497 245.9L500.6 248.5L497 251.1Z" fill="#d81830" shape-rendering="geometricPrecision"/>
<path d="M502.5 236.5 L502.5 260.5" stroke="#000" stroke-width="1" fill="none"/>
<path d="M502.5 242.5 L509 236.5 L519.5 236.5" stroke="#000" stroke-width="1" fill="none"/>
<path d="M502.5 254 L509 260.5 L519.5 260.5" stroke="#000" stroke-width="1" fill="none"/>
<path d="M509 260L504 258.8L507.8 254.8Z" fill="#000"/>
<circle cx="465.5" cy="236.5" r="2.6" fill="#000"/>
<circle cx="465.5" cy="260.5" r="2.6" fill="#000"/>
<circle cx="519.5" cy="236.5" r="2.6" fill="#000"/>
<circle cx="519.5" cy="260.5" r="2.6" fill="#000"/>
<rect x="471.5" y="278.5" width="41" height="35" fill="#fff" stroke="#000"/>
<path d="M465.5 284.5 L483.5 284.5 L483.5 308.5 L465.5 308.5" stroke="#000" stroke-width="1" fill="none"/>
<path d="M475 292H492L483.5 301Z" fill="#f01414"/>
<path d="M475 300.5 L491 300.5" stroke="#000" stroke-width="1" fill="none"/>
<path d="M492.2 296.5H498.5" stroke="#d81830" stroke-width="1.300" fill="none" shape-rendering="geometricPrecision"/>
<path d="M497 293.9L500.6 296.5L497 299.1Z" fill="#d81830" shape-rendering="geometricPrecision"/>
<path d="M502.5 284.5 L502.5 308.5" stroke="#000" stroke-width="1" fill="none"/>
<path d="M502.5 290.5 L509 284.5 L519.5 284.5" stroke="#000" stroke-width="1" fill="none"/>
<path d="M502.5 302 L509 308.5 L519.5 308.5" stroke="#000" stroke-width="1" fill="none"/>
<path d="M509 308L504 306.8L507.8 302.8Z" fill="#000"/>
<circle cx="465.5" cy="284.5" r="2.6" fill="#000"/>
<circle cx="465.5" cy="308.5" r="2.6" fill="#000"/>
<circle cx="519.5" cy="284.5" r="2.6" fill="#000"/>
<circle cx="519.5" cy="308.5" r="2.6" fill="#000"/>
<rect x="569.5" y="129.5" width="59" height="83" fill="#fff" stroke="#000"/>
<path d="M569.5 141.5 H579 Q580 140 580.8 137.5 A3.05 2.4 0 0 1 586.9 137.5 A3.05 2.4 0 0 1 593 137.5 A3.05 2.4 0 0 1 599.1 137.5 A3.05 2.4 0 0 1 605.2 137.5 A3.05 2.4 0 0 1 611.3 137.5 A3.05 2.4 0 0 1 617.4 137.5 L619.5 141.5 V153 L617.4 157 A3.05 2.4 0 0 1 611.3 157 A3.05 2.4 0 0 1 605.2 157 A3.05 2.4 0 0 1 599.1 157 A3.05 2.4 0 0 1 593 157 A3.05 2.4 0 0 1 586.9 157 A3.05 2.4 0 0 1 580.8 157 Q580 155 579 153.5 H569.5" stroke="#000" stroke-width="1.150" fill="none" shape-rendering="geometricPrecision"/>
<path d="M586.9 137.5V140.5M586.9 154V157" stroke="#000" stroke-width="2"/>
<ellipse cx="586.9" cy="142.2" rx="1.700" ry="2.500" fill="none" stroke="#000" stroke-width="1.200"/>
<ellipse cx="586.9" cy="151.8" rx="1.700" ry="2.500" fill="none" stroke="#000" stroke-width="1.200"/>
<path d="M593 137.5V140.5M593 154V157" stroke="#000" stroke-width="2"/>
<ellipse cx="593" cy="142.2" rx="1.700" ry="2.500" fill="none" stroke="#000" stroke-width="1.200"/>
<ellipse cx="593" cy="151.8" rx="1.700" ry="2.500" fill="none" stroke="#000" stroke-width="1.200"/>
<path d="M599.1 137.5V140.5M599.1 154V157" stroke="#000" stroke-width="2"/>
<ellipse cx="599.1" cy="142.2" rx="1.700" ry="2.500" fill="none" stroke="#000" stroke-width="1.200"/>
<ellipse cx="599.1" cy="151.8" rx="1.700" ry="2.500" fill="none" stroke="#000" stroke-width="1.200"/>
<path d="M605.2 137.5V140.5M605.2 154V157" stroke="#000" stroke-width="2"/>
<ellipse cx="605.2" cy="142.2" rx="1.700" ry="2.500" fill="none" stroke="#000" stroke-width="1.200"/>
<ellipse cx="605.2" cy="151.8" rx="1.700" ry="2.500" fill="none" stroke="#000" stroke-width="1.200"/>
<path d="M611.3 137.5V140.5M611.3 154V157" stroke="#000" stroke-width="2"/>
<ellipse cx="611.3" cy="142.2" rx="1.700" ry="2.500" fill="none" stroke="#000" stroke-width="1.200"/>
<ellipse cx="611.3" cy="151.8" rx="1.700" ry="2.500" fill="none" stroke="#000" stroke-width="1.200"/>
<path d="M619.5 147.5 L635.5 147.5" stroke="#000" stroke-width="1" fill="none"/>
<path d="M569.5 189.5 H579 Q580 188 580.8 185.5 A3.05 2.4 0 0 1 586.9 185.5 A3.05 2.4 0 0 1 593 185.5 A3.05 2.4 0 0 1 599.1 185.5 A3.05 2.4 0 0 1 605.2 185.5 A3.05 2.4 0 0 1 611.3 185.5 A3.05 2.4 0 0 1 617.4 185.5 L619.5 189.5 V201 L617.4 205 A3.05 2.4 0 0 1 611.3 205 A3.05 2.4 0 0 1 605.2 205 A3.05 2.4 0 0 1 599.1 205 A3.05 2.4 0 0 1 593 205 A3.05 2.4 0 0 1 586.9 205 A3.05 2.4 0 0 1 580.8 205 Q580 203 579 201.5 H569.5" stroke="#000" stroke-width="1.150" fill="none" shape-rendering="geometricPrecision"/>
<path d="M586.9 185.5V188.5M586.9 202V205" stroke="#000" stroke-width="2"/>
<ellipse cx="586.9" cy="190.2" rx="1.700" ry="2.500" fill="none" stroke="#000" stroke-width="1.200"/>
<ellipse cx="586.9" cy="199.8" rx="1.700" ry="2.500" fill="none" stroke="#000" stroke-width="1.200"/>
<path d="M593 185.5V188.5M593 202V205" stroke="#000" stroke-width="2"/>
<ellipse cx="593" cy="190.2" rx="1.700" ry="2.500" fill="none" stroke="#000" stroke-width="1.200"/>
<ellipse cx="593" cy="199.8" rx="1.700" ry="2.500" fill="none" stroke="#000" stroke-width="1.200"/>
<path d="M599.1 185.5V188.5M599.1 202V205" stroke="#000" stroke-width="2"/>
<ellipse cx="599.1" cy="190.2" rx="1.700" ry="2.500" fill="none" stroke="#000" stroke-width="1.200"/>
<ellipse cx="599.1" cy="199.8" rx="1.700" ry="2.500" fill="none" stroke="#000" stroke-width="1.200"/>
<path d="M605.2 185.5V188.5M605.2 202V205" stroke="#000" stroke-width="2"/>
<ellipse cx="605.2" cy="190.2" rx="1.700" ry="2.500" fill="none" stroke="#000" stroke-width="1.200"/>
<ellipse cx="605.2" cy="199.8" rx="1.700" ry="2.500" fill="none" stroke="#000" stroke-width="1.200"/>
<path d="M611.3 185.5V188.5M611.3 202V205" stroke="#000" stroke-width="2"/>
<ellipse cx="611.3" cy="190.2" rx="1.700" ry="2.500" fill="none" stroke="#000" stroke-width="1.200"/>
<ellipse cx="611.3" cy="199.8" rx="1.700" ry="2.500" fill="none" stroke="#000" stroke-width="1.200"/>
<path d="M619.5 195.5 L635.5 195.5" stroke="#000" stroke-width="1" fill="none"/>
<path d="M563.5 141.5 L569.5 141.5" stroke="#000" stroke-width="1" fill="none"/>
<circle cx="563.5" cy="141.5" r="2.6" fill="#000"/>
<text x="572" y="139" class="mn" text-anchor="start">1</text>
<path d="M563.5 153.5 L569.5 153.5" stroke="#000" stroke-width="1" fill="none"/>
<circle cx="563.5" cy="153.5" r="2.6" fill="#000"/>
<text x="572" y="151" class="mn" text-anchor="start">2</text>
<path d="M563.5 189.5 L569.5 189.5" stroke="#000" stroke-width="1" fill="none"/>
<circle cx="563.5" cy="189.5" r="2.6" fill="#000"/>
<text x="572" y="187" class="mn" text-anchor="start">3</text>
<path d="M563.5 201.5 L569.5 201.5" stroke="#000" stroke-width="1" fill="none"/>
<circle cx="563.5" cy="201.5" r="2.6" fill="#000"/>
<text x="572" y="199" class="mn" text-anchor="start">4</text>
<text x="621.5" y="145" class="ml" text-anchor="start">A</text>
<text x="621.5" y="193" class="ml" text-anchor="start">B</text>
<circle cx="635.5" cy="147.5" r="2.6" fill="#000"/>
<circle cx="635.5" cy="195.5" r="2.6" fill="#000"/>
<circle cx="599.300" cy="171.300" r="6.500" fill="none" stroke="#1a1ab4" stroke-width="1.100"/>
<path d="M599.800 170.800L595.200 175.400" stroke="#1a1ab4" stroke-width="1.100"/>
<path d="M663.5 142.5 L663.5 148.5" stroke="#000" stroke-width="1" fill="none"/>
<circle cx="663.5" cy="148.5" r="2.6" fill="#000"/>
<path d="M663.500 136.800L666.300 139.500L663.500 142.200L660.700 139.500Z" fill="#fff" stroke="#000" stroke-width="1" shape-rendering="geometricPrecision"/>
<text x="663.5" y="134.5" class="pv" text-anchor="middle">+V</text>
</svg>
<!--CIRCUIT-END-->
 </div>

 <!-- STATUS -->
 <div id="status">
 <div class="abs" style="left:1px;top:754px;width:1073px;height:1px;background:#fff"></div>
 <div class="abs sc" style="left:2px;top:756px;width:49px;height:17px"></div>
 <div class="abs sc" style="left:53px;top:756px;width:1019px;height:17px"></div>
 <svg class="ico" style="left:1058px;top:759px" width="14" height="14" viewBox="0 0 14 14">
  <path d="M13.500 1.500L1.500 13.500M13.500 5.500L5.500 13.500M13.500 9.500L9.500 13.500" stroke="#fff" stroke-width="1"/>
  <path d="M13.500 2.500L2.500 13.500M13.500 3.500L3.500 13.500M13.500 6.500L6.500 13.500M13.500 7.500L7.500 13.500M13.500 10.500L10.500 13.500M13.500 11.500L11.500 13.500" stroke="#808080" stroke-width="1"/>
 </svg>
 </div>
</div>
</body>
</html>
